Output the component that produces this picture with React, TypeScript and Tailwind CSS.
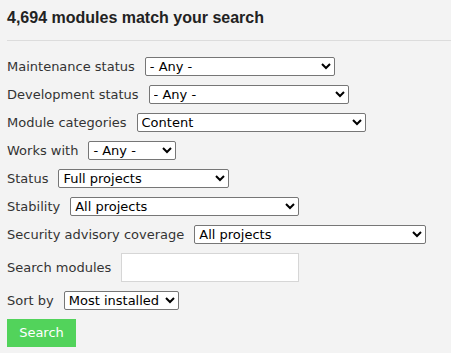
import React from 'react';

interface SelectRow {
  label: string;
  value: string;
  width: number;
}

const rows: SelectRow[] = [
  { label: 'Maintenance status', value: '- Any -', width: 190 },
  { label: 'Development status', value: '- Any -', width: 200 },
  { label: 'Module categories', value: 'Content', width: 229 },
  { label: 'Works with', value: '- Any -', width: 88 },
  { label: 'Status', value: 'Full projects', width: 171 },
  { label: 'Stability', value: 'All projects', width: 229 },
  { label: 'Security advisory coverage', value: 'All projects', width: 232 },
];

const Select: React.FC<{ value: string; width: number }> = ({ value, width }) => (
  <select
    defaultValue={value}
    className="h-[19px] bg-white border border-[#767676] rounded-[2px] text-[13px] text-black"
    style={{ width }}
  >
    <option>{value}</option>
  </select>
);

export default function App() {
  return (
    <div className="w-[451px] h-[353px] bg-[#f3f3f3] pl-[7px] overflow-hidden font-['DejaVu_Sans',sans-serif] text-[13px] text-[#333]">
      <div className="h-[41px] border-b border-[#dcdcdc] pt-[6px]">
        <h2 className="font-['Liberation_Sans',Arial,sans-serif] font-bold text-[16px] leading-[24px] text-[#222]">
          4,694 modules match your search
        </h2>
      </div>
      <form className="flex flex-col gap-[9px] pt-[16px]" onSubmit={(e) => e.preventDefault()}>
        {rows.map((r) => (
          <div key={r.label} className="flex items-center gap-[10px] h-[19px]">
            <label className="leading-[19px]">{r.label}</label>
            <Select value={r.value} width={r.width} />
          </div>
        ))}
        <div className="flex items-center gap-[10px] h-[29px]">
          <label>Search modules</label>
          <input type="text" className="w-[178px] h-[29px] bg-white border border-[#d6d6d6]" />
        </div>
        <div className="flex items-center gap-[10px] h-[19px]">
          <label>Sort by</label>
          <Select value="Most installed" width={115} />
        </div>
        <div>
          <button type="submit" className="w-[69px] h-[28px] bg-[#52d35b] text-white text-[13px]">
            Search
          </button>
        </div>
      </form>
    </div>
  );
}
